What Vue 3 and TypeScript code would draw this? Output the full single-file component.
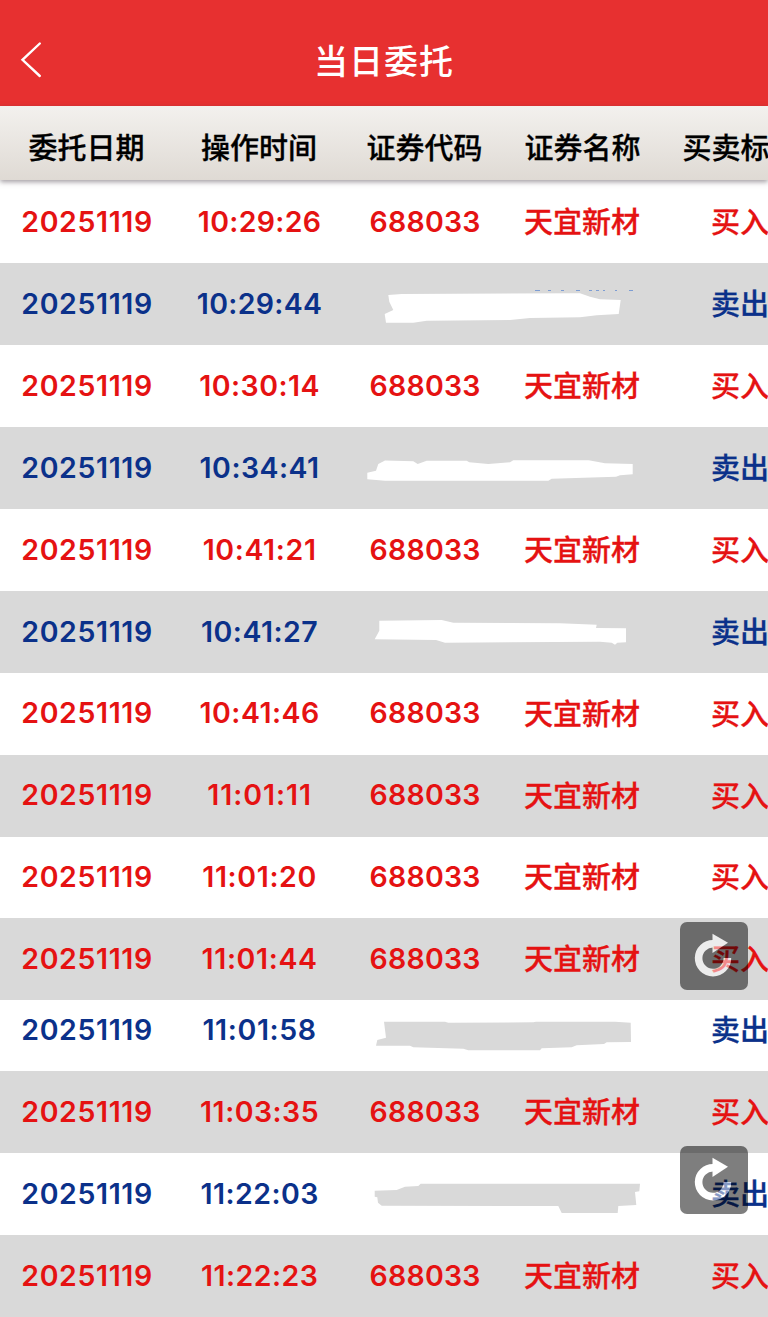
<script setup lang="ts">
interface Order {
  time: string
  side: 'buy' | 'sell'
  shaded?: boolean
  clipped?: boolean
  mask?: string
  residue?: boolean
}

const columns: string[] = ['委托日期', '操作时间', '证券代码', '证券名称', '买卖标志']

// Strings with many narrow "1" digits get a little more tracking.
function tracking(text: string) {
  const ones = text.split('1').length - 1
  return { letterSpacing: ((1.2 + ones * 1.25) / text.length).toFixed(2) + 'px' }
}

const orders: Order[] = [
  { time: '10:29:26', side: 'buy' },
  {
    time: '10:29:44', side: 'sell', shaded: true, residue: true,
    mask: '43.3,32 56.7,31 235,30.3 245,33.7 255,36.3 275.7,37 273.7,51 251.7,52.3 235,54.3 185,55 165,57 81.7,57.7 68.3,59.7 41,59.7 39.7,51 48.3,47 44.3,38.7',
  },
  { time: '10:30:14', side: 'buy' },
  {
    time: '10:34:41', side: 'sell', shaded: true,
    mask: '22.3,45.7 31,43.7 33.3,37 40,33.5 68.3,34.3 72.7,37 81.7,33.7 121.7,33.7 124.3,35.3 143.3,37 165,35.3 168.3,33.3 243.7,33.3 260,36.3 287.7,37 287.7,47.3 275,48.3 271,49.7 206.7,51.7 203.3,53.7 40,53.7 22.3,52.3',
  },
  { time: '10:41:21', side: 'buy' },
  {
    time: '10:41:27', side: 'sell', shaded: true,
    mask: '34.3,29.7 96.7,29 108.3,31.7 215,32.3 251.7,33.7 251,37 281,37.3 281,51.3 272.3,51.7 270,53.7 266.7,51.7 255,50.7 100,51.7 91,49 29.7,48.3 34.3,39.7',
  },
  { time: '10:41:46', side: 'buy' },
  { time: '11:01:11', side: 'buy', shaded: true },
  { time: '11:01:20', side: 'buy' },
  { time: '11:01:44', side: 'buy', shaded: true },
  {
    time: '11:01:58', side: 'sell', clipped: true,
    mask: '39,21.7 100,21.7 103.3,22.7 188.3,22.3 191,21.7 270,21.7 285.7,22.7 286,42 261.7,42.3 259,44 231.7,45.3 226.7,47.3 196.7,48.3 195,50.3 123.3,50.3 118.3,48.7 68.3,47.3 65,45.7 31,45.7 32.3,40 41,37.7',
  },
  { time: '11:03:35', side: 'buy', shaded: true },
  {
    time: '11:22:03', side: 'sell',
    mask: '29.7,37.7 51.7,37 60,33.7 73.3,33 75.7,30.7 295,30.7 294.3,38.3 290,39 291.3,52 273.3,53 272.7,60 216.7,60 213.3,53 36.7,52.7 33,49.7 32.3,44.3 29.7,43.7',
  },
  { time: '11:22:23', side: 'buy', shaded: true },
]
</script>

<template>
  <div class="screen">
    <header class="bar">
      <svg class="back" width="24" height="38" viewBox="0 0 24 38">
        <path d="M20.8 2.5 3.5 18.8 20.8 35" />
      </svg>
      <h1>当日委托</h1>
    </header>

    <div class="grid head">
      <span v-for="c in columns" :key="c">{{ c }}</span>
    </div>

    <main>
      <div
        v-for="o in orders"
        :key="o.time"
        class="grid row"
        :class="[o.side, { shaded: o.shaded, clipped: o.clipped }]"
      >
        <span class="num" :style="tracking('20251119')">20251119</span>
        <span class="num" :style="tracking(o.time)">{{ o.time }}</span>
        <svg v-if="o.mask" class="mask" width="317" height="71" viewBox="0 0 317 71">
          <polygon :points="o.mask" />
          <path v-if="o.residue" class="residue" d="M190 27.5h5M203 27.5h3M216 27.5h3M231 27.5h4M244 27.5h3M251 27.5h3M258 27.5h2M270 27.5h2M284 27.5h4" />
        </svg>
        <template v-else>
          <span class="num" :style="tracking('688033')">688033</span>
          <span class="han">天宜新材</span>
        </template>
        <span class="han">{{ o.side === 'buy' ? '买入' : '卖出' }}</span>
      </div>
    </main>

    <button v-for="n in 2" :key="n" class="refresh" :class="'refresh-' + n" aria-label="刷新">
      <svg width="68" height="68" viewBox="0 0 68 68">
        <path class="arc" d="M33.5 21.8A14.4 14.4 0 1 0 47.4 36" />
        <path class="tip" d="M32.5 11.8 48 20.8 32.5 31Z" />
      </svg>
    </button>
  </div>
</template>

<style>
body {
  background: #fff;
}
</style>

<style scoped>
.screen {
  position: relative;
  width: 768px;
  height: 1317px;
  overflow: hidden;
  background: #fff;
  font-family: Inter, "Noto Sans CJK SC", sans-serif;
  font-size: 29px;
  font-weight: 500;
}
.bar {
  box-sizing: border-box;
  height: 106px;
  padding-top: 14px;
  display: grid;
  grid-template-columns: 64px 1fr 64px;
  align-items: center;
  background: #e73030;
  color: #fff;
}
.back {
  margin-left: 19px;
  fill: none;
  stroke: #fff;
  stroke-width: 2.4;
  stroke-linecap: round;
}
h1 {
  margin: 4px 0 0;
  text-align: center;
  font-size: 34px;
  line-height: 48px;
  font-weight: 500;
  letter-spacing: 1px;
}
.grid {
  display: grid;
  grid-template-columns: 173px 172px 159px 157px 159px;
  align-items: center;
  text-align: center;
  white-space: nowrap;
}
.head {
  position: relative;
  height: 74px;
  background: linear-gradient(#f3f1ee, #dfdad4);
  box-shadow: 0 2px 5px rgba(70, 60, 70, 0.5);
  color: #000;
  -webkit-text-stroke: 0.3px currentColor;
}
.head span {
  padding-top: 5px;
}
main {
  margin-top: 1.4px;
}
.row {
  height: 81.9px;
}
.row.clipped {
  box-sizing: border-box;
  height: 71px;
  padding-bottom: 11px;
}
.clipped .mask {
  margin-bottom: -11px;
}
.shaded {
  background: #d9d9d9;
}
.buy {
  color: #e51212;
}
.sell {
  color: #0b318a;
}
.num {
  padding: 0 0 1.4px 1.2px;
  font-weight: 600;
  font-size: 28.5px;
}
.han {
  padding: 0 1px 4px 0;
  -webkit-text-stroke: 0.3px currentColor;
}
.mask {
  grid-column: span 2;
  align-self: start;
  fill: #d9d9d9;
}
.shaded .mask {
  fill: #fff;
}
.mask .residue {
  stroke: #7d9dd3;
  stroke-width: 1;
}
.refresh {
  position: absolute;
  left: 680px;
  width: 68px;
  height: 68px;
  padding: 0;
  border: 0;
  border-radius: 7px;
  background: #000;
  opacity: 0.5;
}
.refresh svg {
  display: block;
}
.refresh-1 {
  top: 922px;
}
.refresh-2 {
  top: 1146px;
}
.arc {
  fill: none;
  stroke: #fff;
  stroke-width: 7.6;
}
.tip {
  fill: #fff;
}
</style>
